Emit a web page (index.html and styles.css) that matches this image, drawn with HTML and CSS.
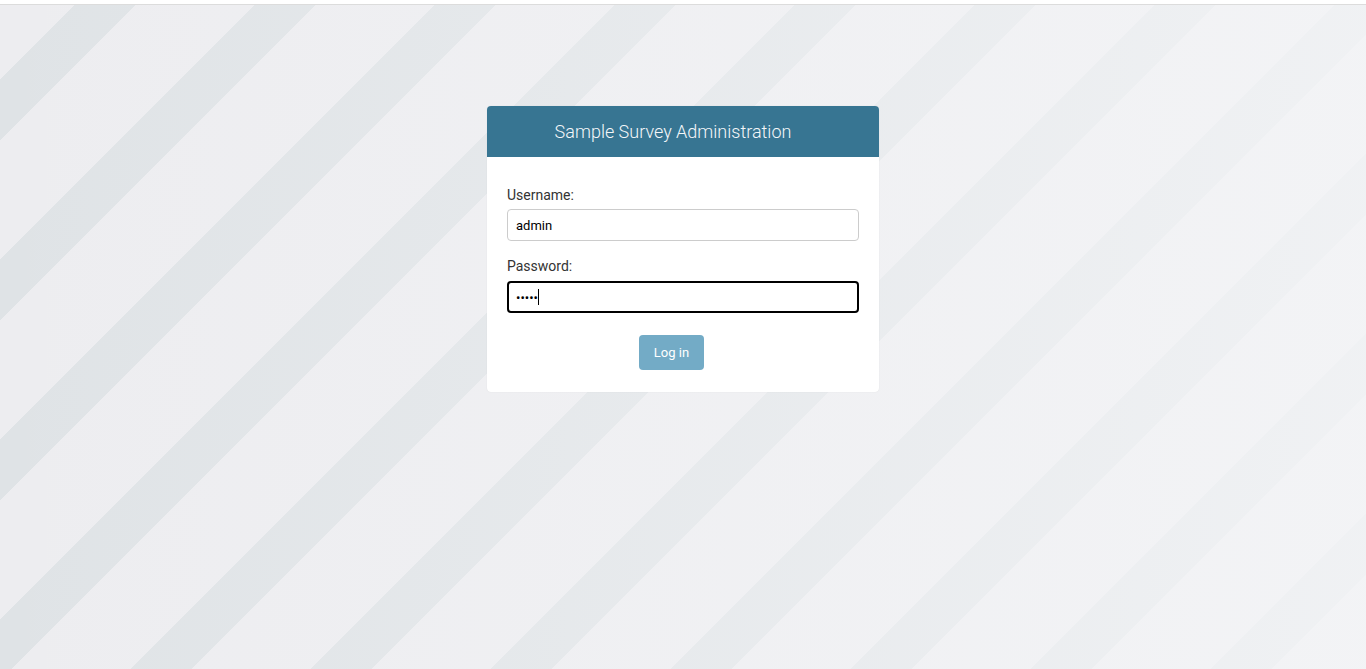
FILE: index.html
```html
<!DOCTYPE html>
<html lang="en">
<head>
<meta charset="utf-8">
<title>Log in | Sample Survey Administration</title>
<link rel="stylesheet" href="styles.css">
</head>
<body>
<div class="topbar"></div>
<main class="page">
  <div class="card">
    <div class="card-header">Sample Survey Administration</div>
    <form class="card-body">
      <div class="row">
        <label class="label" for="u">Username:</label>
        <input class="field" id="u" type="text" value="admin">
      </div>
      <div class="row row-second">
        <label class="label label-second" for="p">Password:</label>
        <div class="field-wrap">
          <input class="field field-focus" id="p" type="password" value="admin">
          <span class="caret"></span>
        </div>
      </div>
      <div class="submit-row">
        <button class="btn" type="button">Log in</button>
      </div>
    </form>
  </div>
</main>
</body>
</html>
```
FILE: styles.css
```css
html, body {
  margin: 0;
  padding: 0;
}
body {
  font-family: Roboto, "Liberation Sans", Arial, sans-serif;
  background: #ffffff;
  color: #333;
}
.topbar {
  height: 4px;
  background: #ffffff;
  border-bottom: 1px solid #dcdcdc;
}
.page {
  height: 664px;
  box-sizing: border-box;
  padding-top: 101px;
  overflow: hidden;
  background:
    linear-gradient(to right, rgba(244,245,247,0) 0%, rgba(244,245,247,0.4) 50%, rgba(244,245,247,0.8) 100%),
    repeating-linear-gradient(135deg, #ededf0 0px, #ededf0 53px, #dfe3e6 53px, #dfe3e6 95.5px, #ededf0 95.5px, #ededf0 127.28px);
}
.card {
  width: 392px;
  margin: 0 auto;
  background: #ffffff;
  border-radius: 4px;
  box-shadow: 0 0 1px rgba(0,0,0,0.12);
  overflow: hidden;
}
.card-header {
  height: 51px;
  background: #377592;
  color: #f4f7f9;
  font-weight: 300;
  font-size: 18px;
  line-height: 51px;
  text-align: center;
  padding-right: 20px;
}
.card-body {
  padding: 28px 20px 22px 20px;
  margin: 0;
}
.row {
  display: flex;
  flex-direction: column;
}
.row-second {
  margin-top: 15px;
}
.label {
  font-size: 14px;
  line-height: 20px;
  height: 20px;
  margin-bottom: 4px;
  color: #333;
}
.label-second {
  margin-bottom: 5px;
}
.field-wrap {
  position: relative;
}
.field {
  box-sizing: border-box;
  width: 352px;
  height: 32px;
  margin: 0;
  padding: 0 8px;
  border: 1px solid #cccccc;
  border-radius: 4px;
  font-family: Roboto, "Liberation Sans", Arial, sans-serif;
  font-size: 13px;
  color: #000;
  background: #fff;
  outline: none;
}
.field-focus {
  border: 2px solid #000;
  padding: 0 7px;
  font-size: 13px;
  letter-spacing: 0;
}
.caret {
  position: absolute;
  left: 31px;
  top: 8px;
  width: 1px;
  height: 16px;
  background: #000;
}
.submit-row {
  display: flex;
  padding-left: 132px;
  margin-top: 22px;
}
.btn {
  width: 65px;
  height: 35px;
  border: none;
  border-radius: 4px;
  background: #73abc6;
  color: #ffffff;
  font-family: Roboto, "Liberation Sans", Arial, sans-serif;
  font-size: 13px;
  padding: 0;
  cursor: pointer;
}
```
